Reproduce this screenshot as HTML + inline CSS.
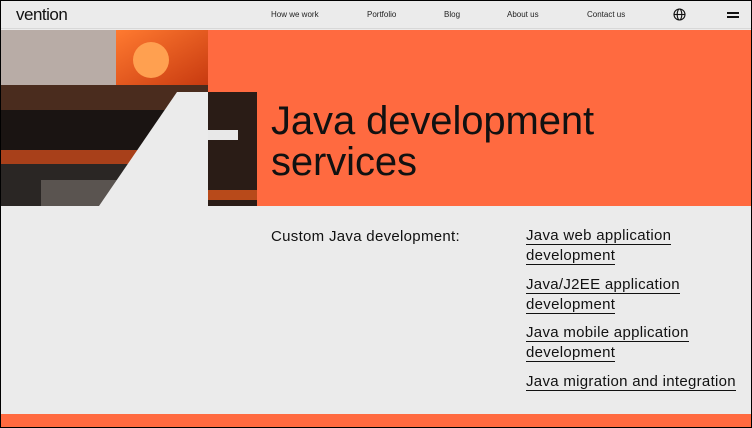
<!DOCTYPE html>
<html><head><style>
*{margin:0;padding:0;box-sizing:border-box}
body{width:752px;height:428px;background:#000;overflow:hidden;font-family:"Liberation Sans",sans-serif}
.page{position:absolute;left:1px;top:1px;width:750px;height:426px;background:#ebebeb;overflow:hidden}
.hdr{position:absolute;left:0;top:0;width:750px;height:28px;border-bottom:1px solid #d8d8d8}
.logo{position:absolute;left:15px;top:4px;font-size:17px;letter-spacing:-0.5px;color:#111}
.nav{position:absolute;top:9px;font-size:8px;color:#222}
.orange{position:absolute;left:207px;top:29px;width:543px;height:176px;background:#ff6a40}
h1{position:absolute;left:270px;top:100px;font-size:40px;font-weight:400;line-height:41px;color:#111;letter-spacing:-0.1px}
.lbl{position:absolute;left:270px;top:227px;font-size:15px;color:#111;letter-spacing:0.3px}
.li{position:absolute;left:525px;font-size:15px;line-height:19.5px;color:#111;letter-spacing:0.3px}
.li span{border-bottom:1.5px solid #111}
.band{position:absolute;left:0;top:413px;width:750px;height:13px;background:#ff6a40}
</style></head><body><div class="page">
<div class="hdr">
<div class="logo">vention</div>
<div class="nav" style="left:270px">How we work</div>
<div class="nav" style="left:366px">Portfolio</div>
<div class="nav" style="left:443px">Blog</div>
<div class="nav" style="left:506px">About us</div>
<div class="nav" style="left:586px">Contact us</div>
<svg style="position:absolute;left:672px;top:7px" width="13" height="13" viewBox="0 0 13 13" fill="none" stroke="#111" stroke-width="1.1"><circle cx="6.5" cy="6.5" r="5.5"/><ellipse cx="6.5" cy="6.5" rx="2.3" ry="5.5"/><path d="M1 6.5h11"/></svg>
<div style="position:absolute;left:726px;top:11px;width:12px;height:1.5px;background:#111"></div>
<div style="position:absolute;left:726px;top:15px;width:12px;height:1.5px;background:#111"></div>
</div>
<div class="orange"></div>
<svg style="position:absolute;left:0;top:29px" width="256" height="176" viewBox="0 0 256 176">
<defs><linearGradient id="s" x1="0" y1="0" x2="1" y2="1"><stop offset="0" stop-color="#ff7a30"/><stop offset="1" stop-color="#c83a10"/></linearGradient></defs>
<rect x="0" y="0" width="207" height="176" fill="#3a2a22"/>
<rect x="0" y="0" width="115" height="55" fill="#b8aca6"/>
<rect x="115" y="0" width="92" height="55" fill="url(#s)"/>
<circle cx="150" cy="30" r="18" fill="#ffa050"/>
<rect x="0" y="55" width="207" height="25" fill="#4a2c1e"/>
<rect x="0" y="80" width="207" height="50" fill="#1a1412"/>
<rect x="0" y="120" width="207" height="14" fill="#a8401a"/>
<rect x="0" y="134" width="207" height="42" fill="#2a2624"/>
<rect x="40" y="150" width="80" height="26" fill="#5a5450"/>
<rect x="207" y="62" width="49" height="114" fill="#2a1c16"/>
<rect x="207" y="100" width="30" height="10" fill="#e8e8e8"/>
<rect x="207" y="160" width="49" height="10" fill="#b84a1a"/>
<polygon points="176,62 207,62 207,176 98,176" fill="#ebebeb"/>
</svg>
<h1>Java development<br>services</h1>
<div class="lbl">Custom Java development:</div>
<div class="li" style="top:225px"><span>Java web application</span><br><span>development</span></div>
<div class="li" style="top:274px"><span>Java/J2EE application</span><br><span>development</span></div>
<div class="li" style="top:322px"><span>Java mobile application</span><br><span>development</span></div>
<div class="li" style="top:371px"><span>Java migration and integration</span></div>
<div class="band"></div>
</div></body></html>
